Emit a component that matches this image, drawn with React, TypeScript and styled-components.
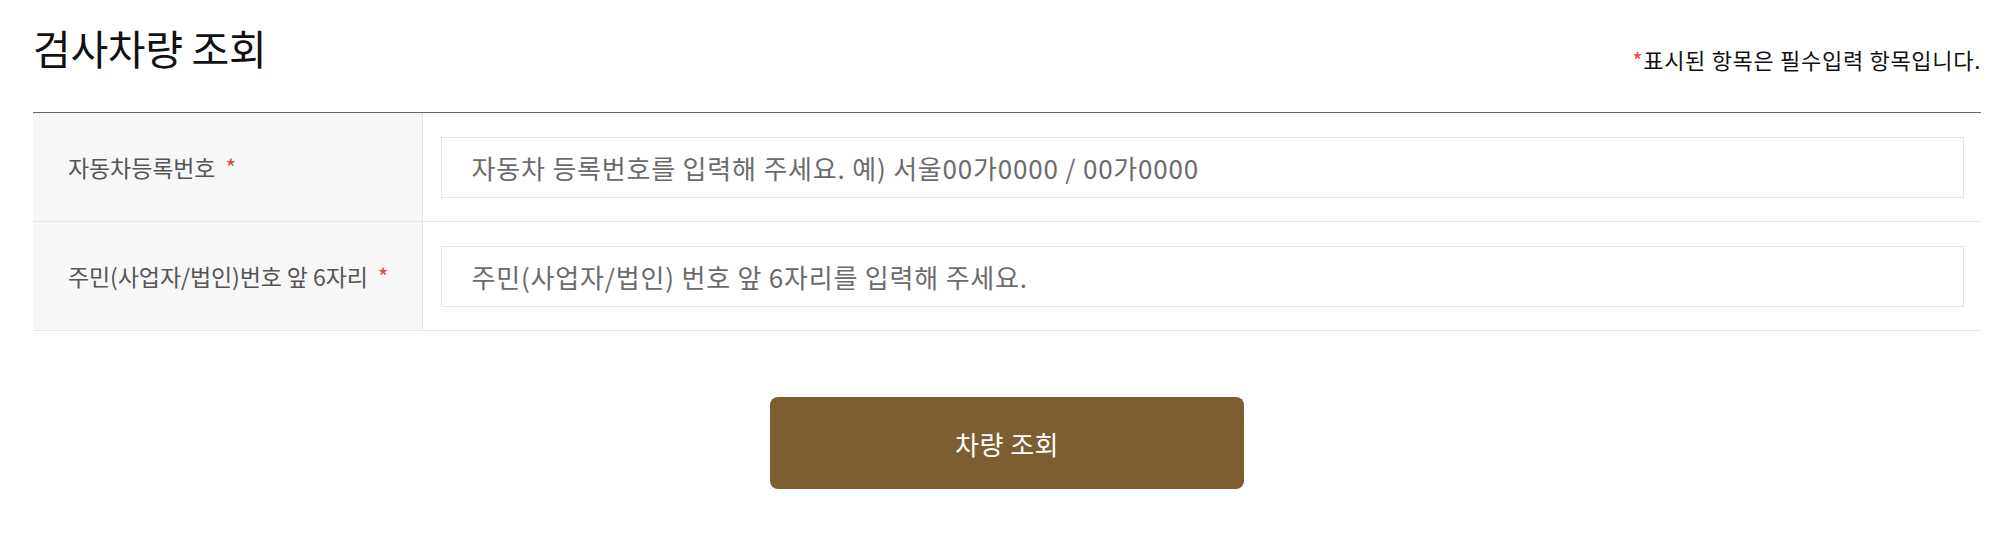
import React from 'react';
import styled, { createGlobalStyle } from 'styled-components';

const GlobalStyle = createGlobalStyle`
  html, body {
    margin: 0;
    padding: 0;
    background: #fff;
  }
  body {
    font-family: 'Noto Sans CJK KR', 'Noto Sans', sans-serif;
    color: #111;
  }
  * {
    box-sizing: border-box;
  }
`;

type Field = {
  key: string;
  label: string;
  placeholder: string;
};

const fields: Field[] = [
  {
    key: 'carNo',
    label: '자동차등록번호',
    placeholder: '자동차 등록번호를 입력해 주세요. 예) 서울00가0000 / 00가0000',
  },
  {
    key: 'ownerNo',
    label: '주민(사업자/법인)번호 앞 6자리',
    placeholder: '주민(사업자/법인) 번호 앞 6자리를 입력해 주세요.',
  },
];

const App: React.FC = () => {
  return (
    <>
      <GlobalStyle />
      <Page>
        <Header>
          <Title>검사차량 조회</Title>
          <Notice>
            <Required>*</Required>표시된 항목은 필수입력 항목입니다.
          </Notice>
        </Header>
        <FormTable>
          {fields.map((field) => (
            <FormRow key={field.key}>
              <LabelCell>
                {field.label} <Required>*</Required>
              </LabelCell>
              <InputCell>
                <TextInput type="text" placeholder={field.placeholder} />
              </InputCell>
            </FormRow>
          ))}
        </FormTable>
        <ButtonArea>
          <SearchButton type="button">차량 조회</SearchButton>
        </ButtonArea>
      </Page>
    </>
  );
};

export default App;

const Page = styled.main`
  width: 1991px;
  padding: 0 10px 0 33px;
`;

const Header = styled.div`
  display: flex;
  justify-content: space-between;
  align-items: flex-end;
  padding: 22px 0 40px;
  border-bottom: 1px solid #666;
`;

const Title = styled.h2`
  margin: 0;
  font-size: 41px;
  font-weight: 400;
  line-height: 50px;
  letter-spacing: -0.3px;
  color: #111;
`;

const Notice = styled.p`
  margin: 0;
  font-size: 22px;
  line-height: 26px;
  color: #111;
  letter-spacing: 0.7px;
`;

const Required = styled.span`
  color: #e0454a;
`;

const FormTable = styled.div`
  display: flex;
  flex-direction: column;
`;

const FormRow = styled.div`
  display: grid;
  grid-template-columns: 20% 1fr;
  border-bottom: 1px solid #e5e5e5;
`;

const LabelCell = styled.div`
  display: flex;
  align-items: center;
  gap: 5px;
  padding: 0 35px;
  background: #f7f7f7;
  border-right: 1px solid #e5e5e5;
  font-size: 23px;
  letter-spacing: -0.1px;
  color: #555;
  white-space: pre;
`;

const InputCell = styled.div`
  padding: 24px 17px 23px 18px;
`;

const TextInput = styled.input`
  display: block;
  width: 100%;
  height: 61px;
  padding: 0 30px;
  border: 1px solid #e5e5e5;
  border-radius: 0;
  outline: none;
  font-family: 'Noto Sans CJK KR', 'Noto Sans', sans-serif;
  font-size: 26px;
  letter-spacing: 0.8px;
  color: #333;
  &::placeholder {
    color: #6b6b6b;
  }
`;

const ButtonArea = styled.div`
  display: flex;
  justify-content: center;
  padding-top: 66px;
`;

const SearchButton = styled.button`
  width: 474px;
  height: 92px;
  border: none;
  border-radius: 8px;
  background: #7d5e33;
  font-family: 'Noto Sans CJK KR', 'Noto Sans', sans-serif;
  font-size: 26px;
  letter-spacing: 0.5px;
  color: #fff;
  cursor: pointer;
`;
